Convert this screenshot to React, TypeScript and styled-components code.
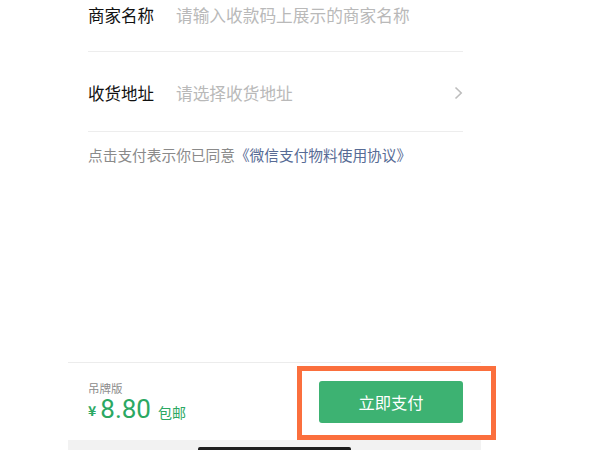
import React from "react";
import styled, { createGlobalStyle } from "styled-components";

const Global = createGlobalStyle`
  html, body { margin: 0; padding: 0; background: #ffffff; }
  body { font-family: "Noto Sans CJK SC", "Noto Sans", sans-serif; overflow: hidden; }
`;

const Page = styled.div`
  position: relative;
  width: 600px;
  height: 450px;
  overflow: hidden;
  background: #ffffff;
`;

const Column = styled.div`
  margin-left: 68px;
  width: 413px;
  height: 450px;
  display: flex;
  flex-direction: column;
`;

const Content = styled.div`
  flex: 1;
  display: flex;
  flex-direction: column;
  padding: 0 18px 0 20px;
`;

const Form = styled.div`
  margin-top: -24px;
  display: flex;
  flex-direction: column;
`;

const Row = styled.div<{ $h: number }>`
  height: ${(p) => p.$h}px;
  box-sizing: border-box;
  border-bottom: 1px solid #ededed;
  display: flex;
  align-items: center;
  padding-top: 2px;
`;

const Label = styled.span`
  font-size: 16.5px;
  color: #111111;
  width: 88px;
  flex-shrink: 0;
  white-space: nowrap;
`;

const Placeholder = styled.span`
  flex: 1;
  font-size: 16.7px;
  color: #b9b9b9;
  white-space: nowrap;
`;

const Chevron = styled.svg`
  width: 9px;
  height: 14px;
`;

const Agreement = styled.p`
  margin: 13px 0 0;
  font-size: 14.7px;
  line-height: 20px;
  color: #8a8a8a;
  white-space: nowrap;
`;

const Link = styled.span`
  color: #576b95;
`;

const Footer = styled.div`
  height: 78px;
  box-sizing: border-box;
  border-top: 1px solid #ececec;
  display: flex;
  align-items: center;
  justify-content: space-between;
  padding: 0 18px 0 20px;
`;

const PriceBlock = styled.div`
  display: flex;
  flex-direction: column;
  margin-top: 2px;
`;

const Tag = styled.span`
  font-size: 11.5px;
  line-height: 16px;
  color: #8c8c8c;
`;

const PriceRow = styled.div`
  display: flex;
  align-items: baseline;
  color: #2ba862;
  line-height: 26px;
`;

const Yen = styled.span`
  font-size: 14px;
  align-self: flex-start;
  margin-top: 1px;
  margin-right: 4px;
  font-weight: 700;
`;

const Amount = styled.span`
  font-family: "Roboto", "Noto Sans", sans-serif;
  font-size: 26px;
  margin-right: 7px;
`;

const Free = styled.span`
  font-size: 14px;
`;

const PayButton = styled.button`
  width: 144px;
  height: 42px;
  border: none;
  border-radius: 3px;
  background: #3db272;
  color: #ffffff;
  font-family: "Noto Sans CJK SC", "Noto Sans", sans-serif;
  font-size: 16.3px;
  padding: 0;
  cursor: pointer;
`;

const BottomStrip = styled.div`
  height: 10px;
  background: #f2f2f2;
  display: flex;
  justify-content: flex-start;
  align-items: flex-end;
`;

const HomeBar = styled.div`
  width: 153px;
  height: 3px;
  margin-left: 130px;
  background: #1e1e1e;
  border-radius: 2px 2px 0 0;
`;

const Highlight = styled.div`
  position: absolute;
  left: 297px;
  top: 366px;
  width: 199px;
  height: 74px;
  box-sizing: border-box;
  border: 5px solid #fb6f3d;
  pointer-events: none;
`;

export default function App() {
  return (
    <Page>
      <Global />
      <Column>
        <Content>
          <Form>
            <Row $h={76}>
              <Label>商家名称</Label>
              <Placeholder>请输入收款码上展示的商家名称</Placeholder>
            </Row>
            <Row $h={80}>
              <Label>收货地址</Label>
              <Placeholder>请选择收货地址</Placeholder>
              <Chevron viewBox="0 0 9 14">
                <path d="M1.5 1.5 L7.2 7 L1.5 12.5" fill="none" stroke="#bdbdbd" strokeWidth="1.6" />
              </Chevron>
            </Row>
          </Form>
          <Agreement>
            点击支付表示你已同意<Link>《微信支付物料使用协议》</Link>
          </Agreement>
        </Content>
        <Footer>
          <PriceBlock>
            <Tag>吊牌版</Tag>
            <PriceRow>
              <Yen>¥</Yen>
              <Amount>8.80</Amount>
              <Free>包邮</Free>
            </PriceRow>
          </PriceBlock>
          <PayButton>立即支付</PayButton>
        </Footer>
        <BottomStrip>
          <HomeBar />
        </BottomStrip>
      </Column>
      <Highlight />
    </Page>
  );
}
